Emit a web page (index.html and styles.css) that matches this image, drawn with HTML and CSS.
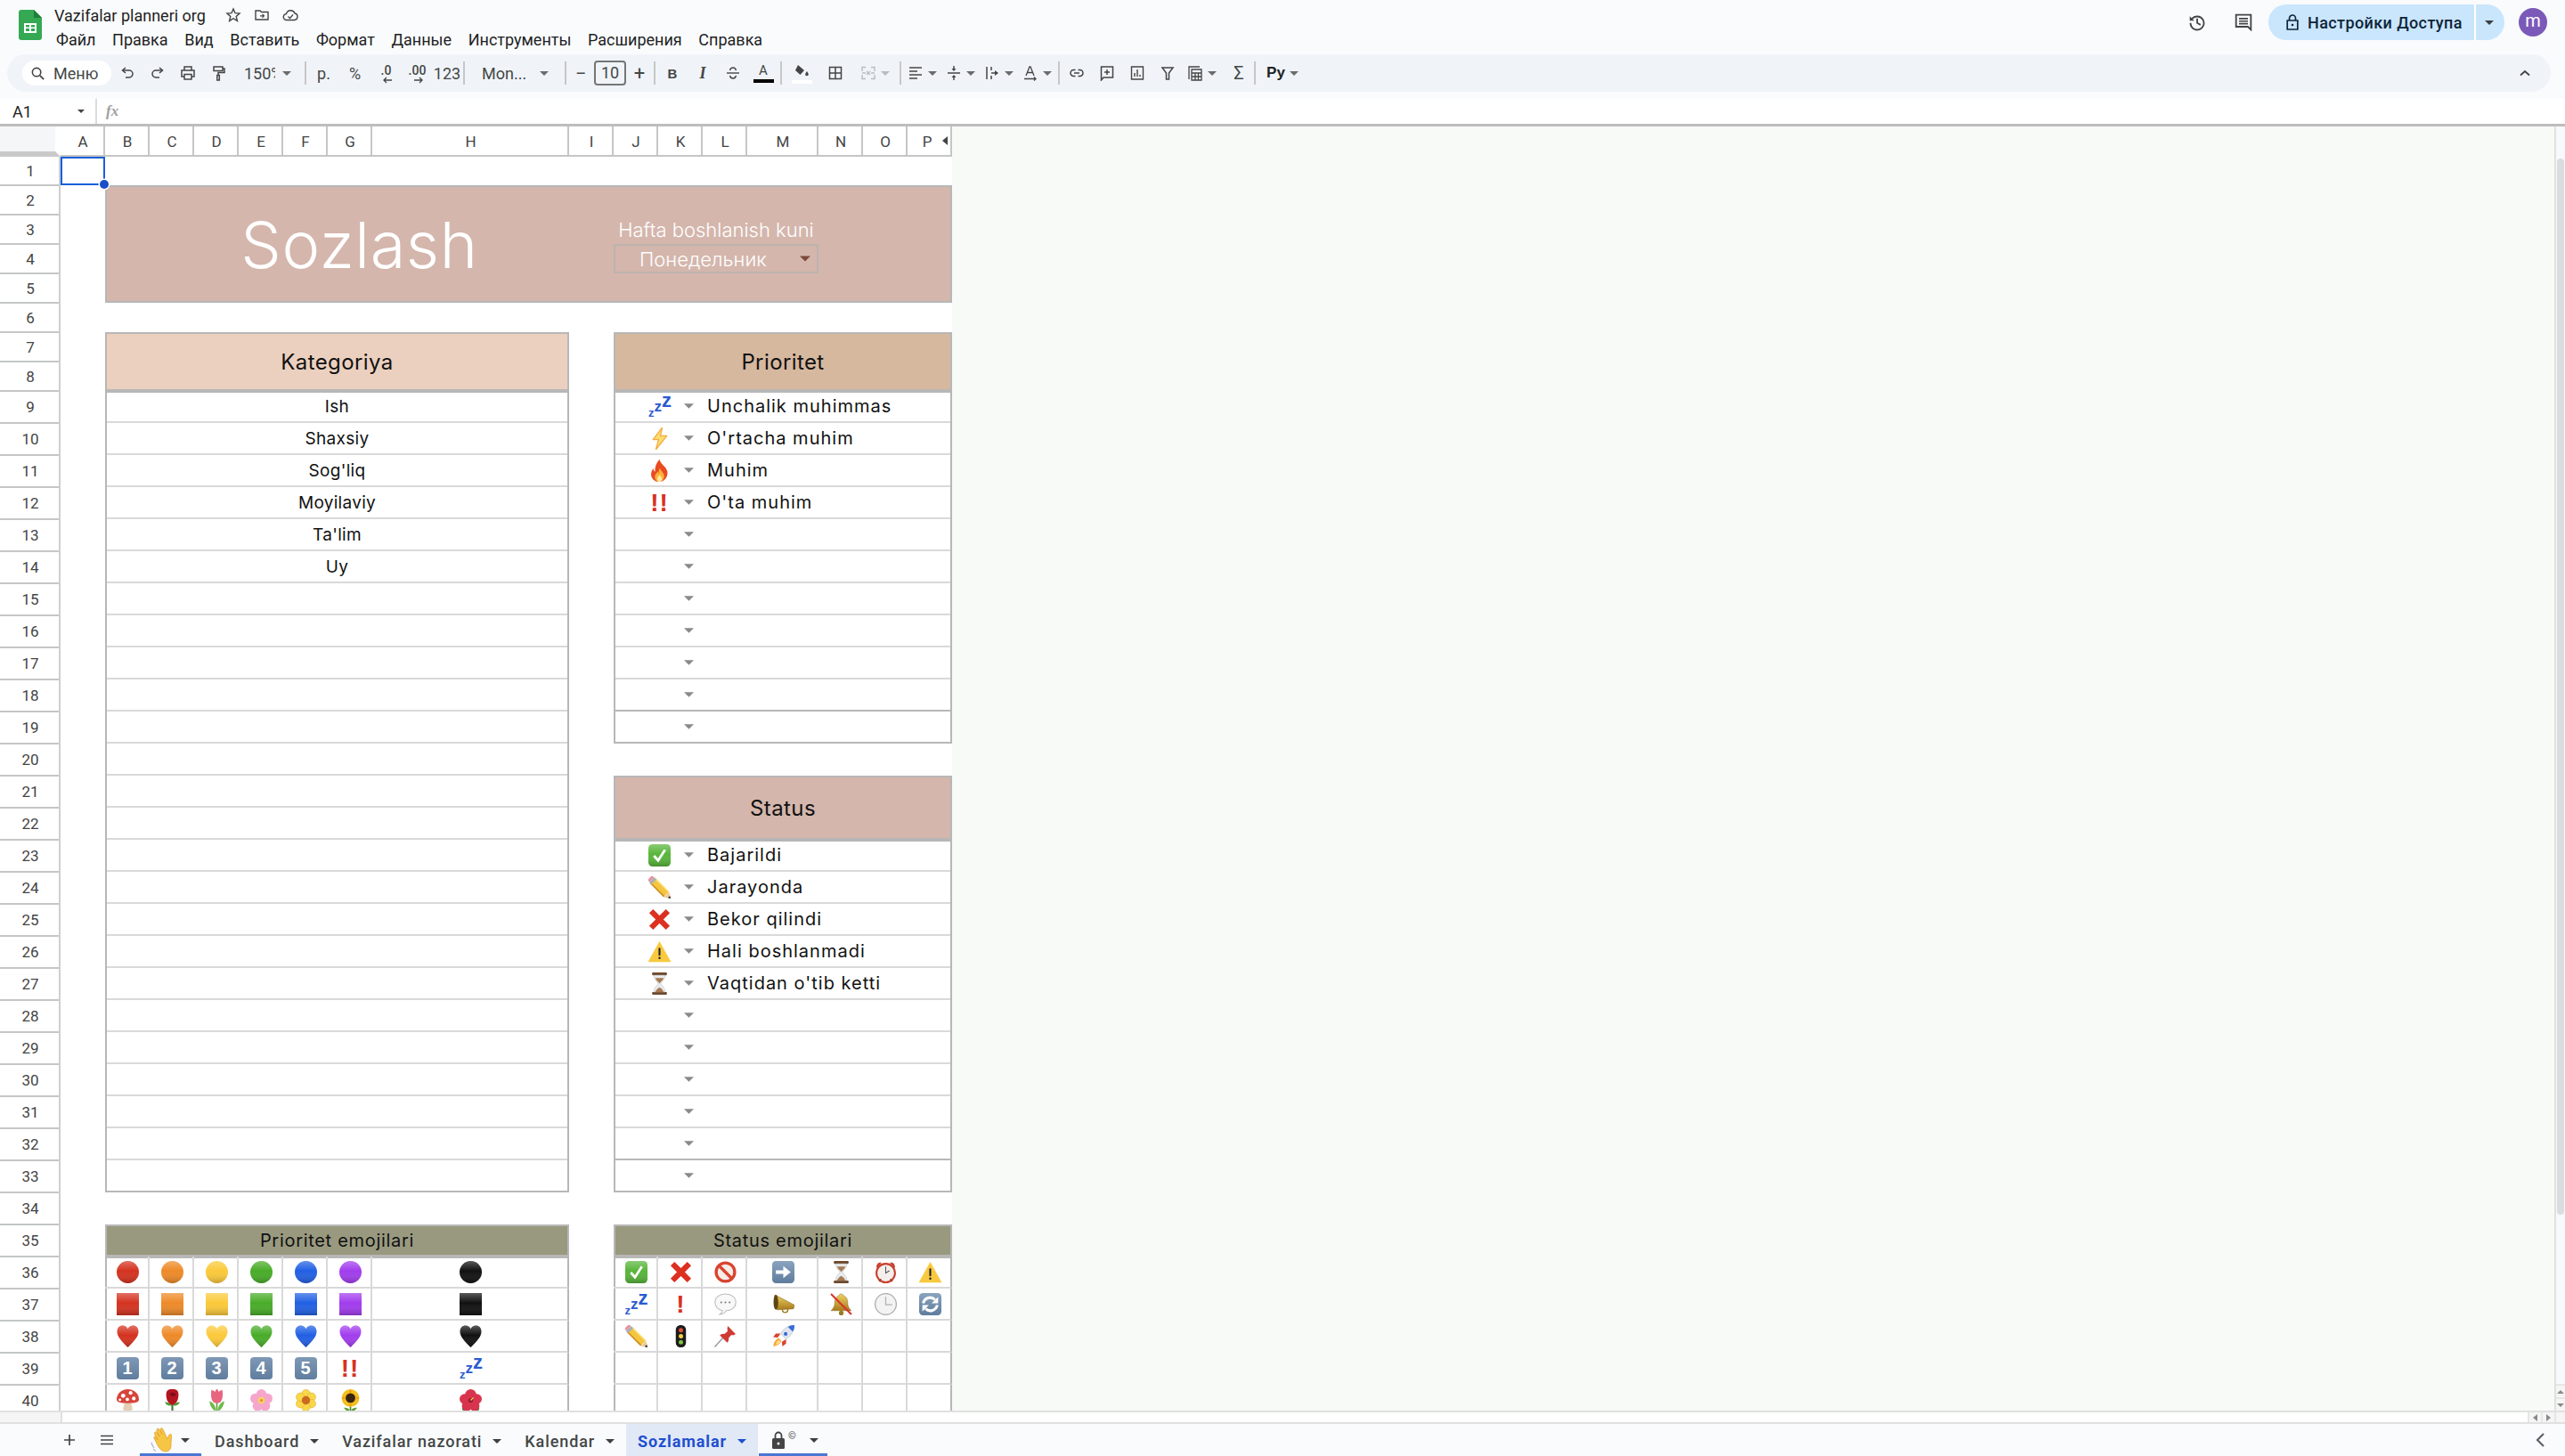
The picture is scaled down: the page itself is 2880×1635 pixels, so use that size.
FILE: index.html
```html
<!DOCTYPE html>
<html lang="ru">
<head>
  <meta charset="UTF-8">
  <title>Vazifalar planneri org</title>
  <link rel="stylesheet" href="styles.css">
</head>
<body>
  <svg class="sprite" aria-hidden="true">
    <defs>
      <linearGradient id="shade" x1="0" y1="0" x2="0" y2="1">
        <stop offset="0" stop-color="#fff" stop-opacity=".3"/>
        <stop offset=".45" stop-color="#fff" stop-opacity="0"/>
        <stop offset="1" stop-color="#000" stop-opacity=".22"/>
      </linearGradient>
      <linearGradient id="steel" x1="0" y1="0" x2="0" y2="1">
        <stop offset="0" stop-color="#8aa3bf"/>
        <stop offset="1" stop-color="#5f7c9d"/>
      </linearGradient>
      <linearGradient id="gold" x1="0" y1="0" x2="0" y2="1">
        <stop offset="0" stop-color="#f0d264"/>
        <stop offset="1" stop-color="#a87a1c"/>
      </linearGradient>
    </defs>
    <symbol id="dot" viewBox="0 0 24 24"><circle cx="12" cy="12" r="12" fill="currentColor"/><circle cx="12" cy="12" r="12" fill="url(#shade)"/></symbol>
    <symbol id="sq" viewBox="0 0 24 24"><rect width="24" height="24" fill="currentColor"/><rect width="24" height="24" fill="url(#shade)"/></symbol>
    <symbol id="heart" viewBox="0 0 24 24"><path d="M12 24C6 18 .5 13 .5 7 .5 3 3 .5 6.500 .5c2.400 0 4.300 1.300 5.500 3.500C13.200 1.800 15.100 .5 17.500 .5 21 .5 23.500 3 23.500 7c0 6-5.500 11-11.500 17z" fill="currentColor"/><path d="M12 24C6 18 .5 13 .5 7 .5 3 3 .5 6.500 .5c2.400 0 4.300 1.300 5.500 3.500C13.200 1.800 15.100 .5 17.500 .5 21 .5 23.500 3 23.500 7c0 6-5.500 11-11.500 17z" fill="url(#shade)"/></symbol>
    <symbol id="zap" viewBox="0 0 24 24"><path d="M15 0 5 13h6L8 24 20 9h-7z" fill="#fcdc72" stroke="#f3aa3c" stroke-width="1.200" stroke-linejoin="round"/></symbol>
    <symbol id="fire" viewBox="0 0 24 24"><path d="M12 0c1 5 7 7 8.500 13 1 5-3 11-8.500 11S2.500 20 3 15c.2-2.500 1.500-4.500 2.500-5.500 0 2 .7 3 1.800 3.500C6.800 8 9 3 12 0z" fill="#ea4a20"/><path d="M12.500 9c.5 3 4.500 5 4.500 9 0 3-2 6-5 6s-5-2.500-5-5.500c0-2.500 2-3.500 3-5.500.4 1 .8 1.500 1.300 1.800C11 12 11.500 10.500 12.500 9z" fill="#fbb13a"/><path d="M12 16c.5 1.500 2.500 2.500 2.500 5 0 2-1 3-2.500 3s-2.500-1-2.500-3c0-2 2-3 2.500-5z" fill="#fde9a0"/></symbol>
    <symbol id="check" viewBox="0 0 24 24"><rect width="24" height="24" rx="4.500" fill="#58b53a"/><rect width="24" height="24" rx="4.500" fill="url(#shade)"/><path d="M6 12.500l4.500 5L18 6" fill="none" stroke="#fff" stroke-width="2.600"/></symbol>
    <symbol id="pencil" viewBox="0 0 24 24"><path d="M4.500 4.500 19.500 19.500" stroke="#f4c53d" stroke-width="7.500"/><path d="M7 2 22 17" stroke="#fbe07a" stroke-width="1.500"/><path d="M2 7 17 22" stroke="#c88d1c" stroke-width="1.500"/><path d="M3.500 3.500 6 6" stroke="#aab0b8" stroke-width="7.500"/><path d="M1.500 1.500 3.500 3.500" stroke="#e88f9a" stroke-width="7"/><path d="M17 22.500 22.500 17l1.500 7z" fill="#e8c79a"/><path d="M21 23.300 23.300 21 24 24z" fill="#222"/></symbol>
    <symbol id="cross" viewBox="0 0 24 24"><path d="M3 3l18 18M21 3 3 21" stroke="#dc3021" stroke-width="6"/></symbol>
    <symbol id="warn" viewBox="0 0 24 24"><path d="M12 1.500 24 23H0z" fill="#f8c93f" stroke="#f8c93f" stroke-width=".6" stroke-linejoin="round"/><rect x="11" y="8" width="2" height="8.500" rx="1" fill="#222"/><circle cx="12" cy="19" r="1.200" fill="#222"/></symbol>
    <symbol id="glass" viewBox="0 0 24 24"><rect x="4" y="0" width="16" height="3" rx="1" fill="#6e4a2e"/><rect x="4" y="21" width="16" height="3" rx="1" fill="#6e4a2e"/><path d="M6 3h12c0 5-4 7-4.500 9 .5 2 4.500 4 4.500 9H6c0-5 4-7 4.500-9C10 10 6 8 6 3z" fill="#e8ecee" stroke="#b8b8b8" stroke-width=".5"/><path d="M7.500 6h9c-1 3-3.500 4-4.500 6-1-2-3.500-3-4.500-6z" fill="#a77a52"/><path d="M12 16c2 1 4 3 4.500 5h-9c.5-2 2.500-4 4.500-5z" fill="#a77a52"/></symbol>
    <symbol id="noentry" viewBox="0 0 24 24"><circle cx="12" cy="12" r="10" fill="#f6ece8" stroke="#d8442f" stroke-width="3.200"/><path d="M5 5l14 14" stroke="#d8442f" stroke-width="3.200"/></symbol>
    <symbol id="arrowbox" viewBox="0 0 24 24"><rect width="24" height="24" rx="4" fill="url(#steel)"/><path d="M4 10h8V5.500l8 6.500-8 6.500V14H4z" fill="#fff"/></symbol>
    <symbol id="alarm" viewBox="0 0 24 24"><path d="M2 6.500C2 3 5 1 7.500 2L2.800 8zM22 6.500C22 3 19 1 16.500 2l4.700 6z" fill="#c8402f"/><circle cx="12" cy="13" r="10" fill="#f4efec" stroke="#c8402f" stroke-width="2"/><path d="M12 6v7l4-2.500" fill="none" stroke="#555" stroke-width="1"/><path d="M5 22l2-2.500M19 22l-2-2.500" stroke="#a03a2a" stroke-width="1.600"/></symbol>
    <symbol id="bubble" viewBox="0 0 24 24"><path d="M12 1C5.500 1 .8 4.800.8 10s4.200 8.500 8 9c-.5 1.500-1.500 3-3 4 3 0 5.500-1.500 7-4 6 0 10.400-3.800 10.400-9S18.500 1 12 1z" fill="#f8f8f8" stroke="#bcbcbc"/><circle cx="7.500" cy="10" r="1" fill="#777"/><circle cx="12" cy="10" r="1" fill="#777"/><circle cx="16.500" cy="10" r="1" fill="#777"/></symbol>
    <symbol id="mega" viewBox="0 0 24 24"><path d="M3 2 24 13l-1 4-17 1C3 18 1 8 3 2z" fill="url(#gold)" stroke="#8d6a1c" stroke-width=".6"/><ellipse cx="4" cy="10" rx="2.500" ry="8" fill="#5d4512"/><path d="M11 17.500c0 2 1 3.500 3 3.500s3-1.500 3-4" fill="none" stroke="#9a7a22" stroke-width="1.400"/></symbol>
    <symbol id="mute" viewBox="0 0 24 24"><path d="M12 1c1.500 0 2.500 1 2.500 2C18 4 19 7 19 11c0 3 1.500 6 4 8H1c2.500-2 4-5 4-8 0-4 1-7 4.500-8C9.500 2 10.500 1 12 1z" fill="url(#gold)" stroke="#8d6a1c" stroke-width=".5"/><circle cx="12" cy="21.500" r="2.500" fill="#9a7a22"/><path d="M1 1l22 22" stroke="#d8342a" stroke-width="2"/></symbol>
    <symbol id="clock" viewBox="0 0 24 24"><circle cx="12" cy="12" r="12" fill="#a9abad"/><circle cx="12" cy="12" r="10.800" fill="#f3f3f3"/><path d="M12 4v8.500h7" fill="none" stroke="#b0b0b0" stroke-width="1.200"/></symbol>
    <symbol id="refresh" viewBox="0 0 24 24"><rect width="24" height="24" rx="4" fill="url(#steel)"/><path d="M4.500 11A7.500 7.500 0 0 1 17 7M19.500 13A7.500 7.500 0 0 1 7 17" fill="none" stroke="#fff" stroke-width="3"/><path d="M20.500 4v7h-7zM3.500 20v-7h7z" fill="#fff"/></symbol>
    <symbol id="traffic" viewBox="0 0 24 24"><rect x="6.500" y="0" width="11" height="24" rx="5" fill="#1c1c1c"/><circle cx="12" cy="5.500" r="2.400" fill="#e0523a"/><circle cx="12" cy="12" r="2.400" fill="#f4cf3e"/><circle cx="12" cy="18.500" r="2.400" fill="#7ec242"/></symbol>
    <symbol id="pin" viewBox="0 0 24 24"><path d="M.5 23.500 10 13" stroke="#8d9aa5" stroke-width="1.300"/><path d="M14.500 1 23 9.500l-2.500 1.500-2 -.5-3 3.500c.5 2-.5 4-1.500 5L6 11c1-1 3-2 5-1.500l3.500-3-.5-2z" fill="#cf3a35"/></symbol>
    <symbol id="rocket" viewBox="0 0 24 24"><path d="M24 0c-6 0-11 3-15 9l6 6c6-4 9-9 9-15z" fill="#dfe6ee" stroke="#a7b2c0" stroke-width=".5"/><path d="M24 0c-3 0-5 .7-7 2l5 5c1.500-2 2-4 2-7z" fill="#3a6ad8"/><circle cx="14.500" cy="9.500" r="2" fill="#3a6ad8"/><path d="M9 9H4L1 13l5 .5zM15 15v5l-4 3-.5-5z" fill="#d8442f"/><path d="M7 14c-3 1-5 4-6 9 5-1 8-3 9-6z" fill="#f8a83a"/><path d="M7 16c-1.500 1-2.500 2.500-3 5 2.500-.5 4-1.500 5-3z" fill="#fde08a"/></symbol>
    <symbol id="shroom" viewBox="0 0 24 24"><path d="M8.500 13h7c0 4 1.500 6 1.500 8 0 2-3 3-5 3s-5-1-5-3c0-2 1.500-4 1.500-8z" fill="#e3cfb4"/><path d="M12 0C5 0 0 5 0 11c0 3 4 4 12 4s12-1 12-4c0-6-5-11-12-11z" fill="#d8433a"/><circle cx="7" cy="7" r="2.300" fill="#fff"/><circle cx="15" cy="4" r="2" fill="#fff"/><circle cx="18.500" cy="10" r="2" fill="#fff"/><circle cx="11.500" cy="11" r="1.800" fill="#fff"/><circle cx="3.500" cy="11.500" r="1.400" fill="#fff"/></symbol>
    <symbol id="rose" viewBox="0 0 24 24"><path d="M11 15h2v9h-2z" fill="#3b7a2c"/><path d="M11 18C8 18 5 17 4 14c3 0 6 1 7 4zM13 18c3 0 6-1 7-4-3 0-6 1-7 4z" fill="#4c9a36"/><path d="M12 0c3-.5 6 1 6.500 4 .5 4-.5 8-2 10-1.500 2-3 3-4.500 3s-3-1-4.500-3c-1.500-2-2.500-6-2-10C6 1 9-.5 12 0z" fill="#b4151f"/><path d="M9 5c2-2 5-2 7 0-1 3-5 4-7 0z" fill="#7d0d16"/></symbol>
    <symbol id="tulip" viewBox="0 0 24 24"><path d="M11.200 13h1.600v11h-1.600z" fill="#5aa23c"/><path d="M11 24C7 22 4.500 18 4 13c4 1 7 5 7 11zM13 24c4-2 6.500-6 7-11-4 1-7 5-7 11z" fill="#6fb84a"/><path d="M6 1c2 0 3.500 1 4 2 .5-1.500 1-3 2-3s1.500 1.500 2 3c.5-1 2-2 4-2 .5 5 .5 9-1.500 12-1 1.500-2.500 2-4.500 2s-3.500-.5-4.500-2C5.500 10 5.500 6 6 1z" fill="#e8657f"/></symbol>
    <symbol id="blossom" viewBox="0 0 24 24"><g fill="#f6a6cc"><circle cx="12" cy="5.500" r="5.500"/><circle cx="18.500" cy="10" r="5.500"/><circle cx="16" cy="18" r="5.500"/><circle cx="8" cy="18" r="5.500"/><circle cx="5.500" cy="10" r="5.500"/></g><circle cx="12" cy="12" r="3.600" fill="#f4d35e"/><circle cx="12" cy="12" r="1.500" fill="#e88b3a"/></symbol>
    <symbol id="bloom" viewBox="0 0 24 24"><g fill="#f8d84a" stroke="#e0a92a" stroke-width=".5"><circle cx="12" cy="5" r="4.600"/><circle cx="18" cy="8.500" r="4.600"/><circle cx="18" cy="15.500" r="4.600"/><circle cx="12" cy="19" r="4.600"/><circle cx="6" cy="15.500" r="4.600"/><circle cx="6" cy="8.500" r="4.600"/></g><circle cx="12" cy="12" r="4.500" fill="#cc6a1e"/></symbol>
    <symbol id="sunflower" viewBox="0 0 24 24"><path d="M11.200 16h1.600v8h-1.600z" fill="#4c8a30"/><path d="M11 22c-2-2-4-2.500-6-2 1 2.500 3.500 4 6 4zM13 22c2-2 4-2.500 6-2-1 2.500-3.500 4-6 4z" fill="#5fa03c"/><circle cx="12" cy="9.500" r="9.500" fill="#f5bf1e"/><path d="M12 0l1.500 3h-3zM12 19l1.500-3h-3zM2.500 9.500l3 1.500v-3zM21.500 9.500l-3 1.500v-3z" fill="#e59a12"/><circle cx="12" cy="9.500" r="5.200" fill="#3a2412"/></symbol>
    <symbol id="hibiscus" viewBox="0 0 24 24"><path d="M3 20c-1 2 1 4 4 4l3-4zM21 20c1 2-1 4-4 4l-3-4z" fill="#3f8f3a"/><g fill="#d8344e"><circle cx="12" cy="6" r="6"/><circle cx="18.500" cy="10.500" r="5.500"/><circle cx="16" cy="18" r="5.500"/><circle cx="8" cy="18" r="5.500"/><circle cx="5.500" cy="10.500" r="5.500"/></g><circle cx="12" cy="12" r="2.500" fill="#961b33"/><path d="M12 12l3-3" stroke="#f6cf44" stroke-width="1.300"/></symbol>
    <symbol id="wave" viewBox="0 0 24 28"><path d="M4 12 8 20c2 4 5 7 9 7 4 0 6-3 6-7 0-3 0-7 1-11-.5-2-2.500-2-3.500 0l-1.500 4-5-11c-1-2-3-1.500-3 .5l2 5L10 2.500C9 .5 6.500 1 7 3.500L10 10 7.500 6C6.500 4 4 5 4.500 7l3.500 7-2-3c-1-1.500-3-.5-2 1z" fill="#f6c544" stroke="#dc9a22" stroke-width=".7"/><path d="M1 17c.5 2 1.500 4 3 6M3 24c1 1.300 2 2 3 2.500" fill="none" stroke="#a8b4bd" stroke-width="1.200"/></symbol>
    <symbol id="caret" viewBox="0 0 10 5"><path d="M0 0h10L5 5z" fill="currentColor"/></symbol>
  </svg>

  <header class="topbar">
    <svg class="logo" viewBox="0 0 26 34"><path d="M3 0h14l9 9v22a3 3 0 0 1-3 3H3a3 3 0 0 1-3-3V3a3 3 0 0 1 3-3z" fill="#34a853"/><path d="M17 0l9 9h-9z" fill="#1e7e3a"/><path d="M6 15h14v11H6zm2 2v2.500h4V17zm6 0v2.500h4V17zM8 21v3h4v-3zm6 0v3h4v-3z" fill="#fff" fill-rule="evenodd"/></svg>
    <div class="doc">
      <div class="doc-title">
        <span class="doc-name">Vazifalar planneri org</span>
        <svg class="doc-ico" viewBox="0 0 18 18"><path d="M9 2l2 4.700 5 .4-3.800 3.300 1.200 5L9 12.700 4.600 15.400l1.200-5L2 7.100l5-.4z" fill="none" stroke="#444" stroke-width="1.400"/></svg>
        <svg class="doc-ico" viewBox="0 0 18 18"><path d="M2 4h5l1.500 1.500H16V14H2z" fill="none" stroke="#444" stroke-width="1.400"/><path d="M7 9.800h4.500M9.500 7.800l2 2-2 2" fill="none" stroke="#444" stroke-width="1.200"/></svg>
        <svg class="doc-ico" viewBox="0 0 18 18"><path d="M5 14.500a3.500 3.500 0 0 1-.5-7A5 5 0 0 1 14 7a3.800 3.800 0 0 1-.5 7.500z" fill="none" stroke="#444" stroke-width="1.400"/><path d="M6.500 10.500l2 2 3.500-4" fill="none" stroke="#444" stroke-width="1.200"/></svg>
      </div>
      <nav class="menu">
        <span>Файл</span><span>Правка</span><span>Вид</span><span>Вставить</span><span>Формат</span><span>Данные</span><span>Инструменты</span><span>Расширения</span><span>Справка</span>
      </nav>
    </div>
    <div class="actions">
      <svg class="act-ico" viewBox="0 0 24 24"><path d="M5 7.500A9 9 0 1 1 3 13" fill="none" stroke="#444" stroke-width="2.200"/><path d="M2 4v6h6z" fill="#444"/><path d="M12 7v6l4.500 2.500" fill="none" stroke="#444" stroke-width="2.200"/></svg>
      <svg class="act-ico act-comment" viewBox="0 0 24 24"><path d="M2 2h20v20l-4-4H2z" fill="none" stroke="#444" stroke-width="2.200"/><path d="M6 7h12M6 10.500h12M6 14h12" stroke="#444" stroke-width="2"/></svg>
      <div class="share">
        <span class="share-main">
          <svg class="share-lock" viewBox="0 0 14 18"><path d="M3.500 7V4.500a3.500 3.500 0 0 1 7 0V7M1.200 7h11.600v10H1.200z" fill="none" stroke="#0f2438" stroke-width="1.700"/><circle cx="7" cy="12" r="1.300" fill="#0f2438"/></svg>
          Настройки Доступа
        </span>
        <span class="share-drop"><svg class="caret dark"><use href="#caret"/></svg></span>
      </div>
      <div class="avatar">m</div>
    </div>
  </header>

  <div class="toolbar">
    <div class="search">
      <svg class="ti small" viewBox="0 0 18 18"><circle cx="7.500" cy="7.500" r="5" fill="none" stroke="#444" stroke-width="1.700"/><path d="M11.500 11.500 16 16" stroke="#444" stroke-width="1.900"/></svg>
      <span>Меню</span>
    </div>
    <div class="tb"><svg class="ti" viewBox="0 0 18 18"><path d="M4 6h7a3.500 3.500 0 0 1 0 8H7" fill="none" stroke="#444" stroke-width="1.500"/><path d="M7 3 3.500 6 7 9" fill="none" stroke="#444" stroke-width="1.500"/></svg></div>
    <div class="tb"><svg class="ti" viewBox="0 0 18 18"><path d="M14 6H7a3.500 3.500 0 0 0 0 8h4" fill="none" stroke="#444" stroke-width="1.500"/><path d="M11 3l3.500 3L11 9" fill="none" stroke="#444" stroke-width="1.500"/></svg></div>
    <div class="tb"><svg class="ti" viewBox="0 0 18 18"><path d="M5 6V2h8v4M5 13H2V6h14v7h-3M5 10.500h8V16H5z" fill="none" stroke="#444" stroke-width="1.500"/></svg></div>
    <div class="tb"><svg class="ti" viewBox="0 0 18 18"><path d="M4 2h10v4.500H4zM14 4h2v4.500H9v3M7.800 11.500h2.500V17H7.800z" fill="none" stroke="#444" stroke-width="1.500"/></svg></div>
    <div class="tb zoom"><span class="zoom-val">150%</span><svg class="caret"><use href="#caret"/></svg></div>
    <i class="sep"></i>
    <div class="tb w35">р.</div>
    <div class="tb w35">%</div>
    <div class="tb w35 tiny">.0<svg class="ti dec" viewBox="0 0 12 8"><path d="M11 4H3M5 1 2 4l3 3" fill="none" stroke="#444" stroke-width="1.300"/></svg></div>
    <div class="tb w35 tiny">.00<svg class="ti dec" viewBox="0 0 12 8"><path d="M1 4h8M7 1l3 3-3 3" fill="none" stroke="#444" stroke-width="1.300"/></svg></div>
    <div class="tb w30">123</div>
    <i class="sep"></i>
    <div class="tb fontname"><span>Mon...</span><svg class="caret"><use href="#caret"/></svg></div>
    <i class="sep"></i>
    <div class="tb w26">−</div>
    <div class="sizebox">10</div>
    <div class="tb w26">+</div>
    <i class="sep"></i>
    <div class="tb fmt bold">B</div>
    <div class="tb fmt ital">I</div>
    <div class="tb"><svg class="ti" viewBox="0 0 18 18"><path d="M2 9h14" stroke="#444" stroke-width="1.400"/><path d="M12.500 6c-.5-2-2-3-3.500-3S6 4 5.500 6M5.500 12c.5 2 2 3 3.500 3s3-1 3.500-3" fill="none" stroke="#444" stroke-width="1.400"/></svg></div>
    <div class="tb stacked"><span class="let">A</span><i class="bar black"></i></div>
    <i class="sep"></i>
    <div class="tb stacked w40"><svg class="ti" viewBox="0 0 18 14"><path d="M5 1l7 6-4.500 5L2 7z" fill="#444"/><path d="M15 8c1 1.500 1.800 2.500 1.800 3.500a1.800 1.800 0 0 1-3.600 0C13.200 10.500 14 9.500 15 8z" fill="#444"/></svg><i class="bar white"></i></div>
    <div class="tb w32"><svg class="ti" viewBox="0 0 18 18"><path d="M2.500 2.500h13v13h-13zM9 2.500v13M2.500 9h13" fill="none" stroke="#444" stroke-width="1.500"/></svg></div>
    <div class="tb w50 off"><svg class="ti" viewBox="0 0 18 18"><path d="M2 7V2.500h4M12 2.500h4V7M2 11v4.500h4M12 15.500h4V11M2 9h4M12 9h4M7 7l2 2-2 2M11 7 9 9l2 2" fill="none" stroke="#b7bcc0" stroke-width="1.400"/></svg><svg class="caret"><use href="#caret"/></svg></div>
    <i class="sep"></i>
    <div class="tb w42"><svg class="ti" viewBox="0 0 18 18"><path d="M2 3h14M2 7h9M2 11h14M2 15h9" stroke="#444" stroke-width="1.500"/></svg><svg class="caret"><use href="#caret"/></svg></div>
    <div class="tb w42"><svg class="ti" viewBox="0 0 18 18"><path d="M2 9h14" stroke="#444" stroke-width="1.500"/><path d="M9 1v5M9 12v5" stroke="#444" stroke-width="1.400"/><path d="M6.500 4 9 7l2.500-3zM6.500 14 9 11l2.500 3z" fill="#444"/></svg><svg class="caret"><use href="#caret"/></svg></div>
    <div class="tb w42"><svg class="ti" viewBox="0 0 18 18"><path d="M3 2v14M8 2v4M8 12v4M8 9h7" fill="none" stroke="#444" stroke-width="1.500"/><path d="M12 6l4 3-4 3z" fill="#444"/></svg><svg class="caret"><use href="#caret"/></svg></div>
    <div class="tb w42"><svg class="ti" viewBox="0 0 18 18"><path d="M4 12 8 2h1l4 10M5.500 8.500h6M2 15.500h13M13 13.500l2 2-2 2" fill="none" stroke="#444" stroke-width="1.300"/></svg><svg class="caret"><use href="#caret"/></svg></div>
    <i class="sep"></i>
    <div class="tb"><svg class="ti" viewBox="0 0 18 18"><path d="M7.500 5.500H5.500a3.500 3.500 0 0 0 0 7h2M10.500 5.500h2a3.500 3.500 0 0 1 0 7h-2M6 9h6" fill="none" stroke="#444" stroke-width="1.500"/></svg></div>
    <div class="tb"><svg class="ti" viewBox="0 0 18 18"><path d="M2.500 2h13v12H5l-2.500 3zM9 5v6M6 8h6" fill="none" stroke="#444" stroke-width="1.500"/></svg></div>
    <div class="tb"><svg class="ti" viewBox="0 0 18 18"><path d="M2.500 2h13v14h-13zM6 13V9M9 13V5M12 13v-2" fill="none" stroke="#444" stroke-width="1.400"/></svg></div>
    <div class="tb"><svg class="ti" viewBox="0 0 18 18"><path d="M3 3h12l-4.500 6v7h-3V9z" fill="none" stroke="#444" stroke-width="1.500"/></svg></div>
    <div class="tb w42"><svg class="ti" viewBox="0 0 18 18"><path d="M2 16V2h12M5 5h11v12H5zM5 9h11M5 13h11M9 9v8M12.500 9v8" fill="none" stroke="#444" stroke-width="1.300"/></svg><svg class="caret"><use href="#caret"/></svg></div>
    <div class="tb sigma">Σ</div>
    <i class="sep"></i>
    <div class="tb w50 script"><span>Ру</span><svg class="caret"><use href="#caret"/></svg></div>
    <svg class="collapse" viewBox="0 0 18 18"><path d="M4 11.500 9 7l5 4.500" fill="none" stroke="#444" stroke-width="1.800"/></svg>
  </div>

  <div class="formula">
    <div class="namebox"><span>A1</span><svg class="caret"><use href="#caret"/></svg></div>
    <div class="fx">fx</div>
  </div>

  <main class="sheet">
    <div class="book">
      <div class="colhead">
        <div class="corner"></div>
        <span>A</span><span>B</span><span>C</span><span>D</span><span>E</span><span>F</span><span>G</span><span>H</span><span>I</span><span>J</span><span>K</span><span>L</span><span>M</span><span>N</span><span>O</span><span class="last">P<i class="hide-arrow"></i></span>
      </div>
      <div class="body">
        <div class="rownums">
          <span class="r-s">1</span><span class="r-s">2</span><span class="r-s">3</span><span class="r-s">4</span><span class="r-s">5</span><span class="r-s">6</span><span class="r-s">7</span><span class="r-s">8</span>
          <span>9</span><span>10</span><span>11</span><span>12</span><span>13</span><span>14</span><span>15</span><span>16</span><span>17</span><span>18</span><span>19</span><span>20</span><span>21</span><span>22</span><span>23</span><span>24</span><span>25</span><span>26</span><span>27</span><span>28</span><span>29</span><span>30</span><span>31</span><span>32</span><span>33</span><span>34</span><span>35</span><span>36</span><span>37</span><span>38</span><span>39</span><span>40</span>
        </div>
        <div class="cells">
          <div class="banner"></div>
          <div class="cursor"><i class="handle"></i></div>
          <h1 class="banner-title">Sozlash</h1>
          <div class="banner-label">Hafta boshlanish kuni</div>
          <div class="banner-select"><span>Понедельник</span><svg class="caret brown"><use href="#caret"/></svg></div>

          <h2 class="thead cat-head">Kategoriya</h2>
          <div class="list cat-list">
            <div class="row">Ish</div><div class="row">Shaxsiy</div><div class="row">Sog'liq</div><div class="row">Moyilaviy</div><div class="row">Ta'lim</div><div class="row">Uy</div>
            <div class="row"></div><div class="row"></div><div class="row"></div><div class="row"></div><div class="row"></div><div class="row"></div><div class="row"></div><div class="row"></div><div class="row"></div><div class="row"></div><div class="row"></div><div class="row"></div><div class="row"></div><div class="row"></div><div class="row"></div><div class="row"></div><div class="row"></div><div class="row"></div><div class="row"></div>
          </div>

          <h2 class="thead pri-head">Prioritet</h2>
          <div class="list pri-list">
            <div class="pick"><span class="em zzz"><b>z</b><b>z</b><b>z</b></span><svg class="caret"><use href="#caret"/></svg><span>Unchalik muhimmas</span></div>
            <div class="pick"><svg class="em"><use href="#zap"/></svg><svg class="caret"><use href="#caret"/></svg><span>O'rtacha muhim</span></div>
            <div class="pick"><svg class="em"><use href="#fire"/></svg><svg class="caret"><use href="#caret"/></svg><span>Muhim</span></div>
            <div class="pick"><span class="em bang">!!</span><svg class="caret"><use href="#caret"/></svg><span>O'ta muhim</span></div>
            <div class="pick"><i class="em"></i><svg class="caret"><use href="#caret"/></svg></div>
            <div class="pick"><i class="em"></i><svg class="caret"><use href="#caret"/></svg></div>
            <div class="pick"><i class="em"></i><svg class="caret"><use href="#caret"/></svg></div>
            <div class="pick"><i class="em"></i><svg class="caret"><use href="#caret"/></svg></div>
            <div class="pick"><i class="em"></i><svg class="caret"><use href="#caret"/></svg></div>
            <div class="pick dark-line"><i class="em"></i><svg class="caret"><use href="#caret"/></svg></div>
            <div class="pick"><i class="em"></i><svg class="caret"><use href="#caret"/></svg></div>
          </div>

          <h2 class="thead st-head">Status</h2>
          <div class="list st-list">
            <div class="pick"><svg class="em"><use href="#check"/></svg><svg class="caret"><use href="#caret"/></svg><span>Bajarildi</span></div>
            <div class="pick"><svg class="em"><use href="#pencil"/></svg><svg class="caret"><use href="#caret"/></svg><span>Jarayonda</span></div>
            <div class="pick"><svg class="em"><use href="#cross"/></svg><svg class="caret"><use href="#caret"/></svg><span>Bekor qilindi</span></div>
            <div class="pick"><svg class="em"><use href="#warn"/></svg><svg class="caret"><use href="#caret"/></svg><span>Hali boshlanmadi</span></div>
            <div class="pick"><svg class="em"><use href="#glass"/></svg><svg class="caret"><use href="#caret"/></svg><span>Vaqtidan o'tib ketti</span></div>
            <div class="pick"><i class="em"></i><svg class="caret"><use href="#caret"/></svg></div>
            <div class="pick"><i class="em"></i><svg class="caret"><use href="#caret"/></svg></div>
            <div class="pick"><i class="em"></i><svg class="caret"><use href="#caret"/></svg></div>
            <div class="pick"><i class="em"></i><svg class="caret"><use href="#caret"/></svg></div>
            <div class="pick dark-line"><i class="em"></i><svg class="caret"><use href="#caret"/></svg></div>
            <div class="pick"><i class="em"></i><svg class="caret"><use href="#caret"/></svg></div>
          </div>

          <h3 class="ehead pe-head">Prioritet emojilari</h3>
          <div class="egrid pe-grid">
            <div><svg class="em c-red"><use href="#dot"/></svg></div><div><svg class="em c-orange"><use href="#dot"/></svg></div><div><svg class="em c-yellow"><use href="#dot"/></svg></div><div><svg class="em c-green"><use href="#dot"/></svg></div><div><svg class="em c-blue"><use href="#dot"/></svg></div><div><svg class="em c-purple"><use href="#dot"/></svg></div><div><svg class="em c-black"><use href="#dot"/></svg></div>
            <div><svg class="em c-red"><use href="#sq"/></svg></div><div><svg class="em c-orange"><use href="#sq"/></svg></div><div><svg class="em c-yellow"><use href="#sq"/></svg></div><div><svg class="em c-green"><use href="#sq"/></svg></div><div><svg class="em c-blue"><use href="#sq"/></svg></div><div><svg class="em c-purple"><use href="#sq"/></svg></div><div><svg class="em c-black"><use href="#sq"/></svg></div>
            <div><svg class="em c-red"><use href="#heart"/></svg></div><div><svg class="em c-orange"><use href="#heart"/></svg></div><div><svg class="em c-yellow"><use href="#heart"/></svg></div><div><svg class="em c-green"><use href="#heart"/></svg></div><div><svg class="em c-blue"><use href="#heart"/></svg></div><div><svg class="em c-purple"><use href="#heart"/></svg></div><div><svg class="em c-black"><use href="#heart"/></svg></div>
            <div><span class="em keycap">1</span></div><div><span class="em keycap">2</span></div><div><span class="em keycap">3</span></div><div><span class="em keycap">4</span></div><div><span class="em keycap">5</span></div><div><span class="em bang">!!</span></div><div><span class="em zzz"><b>z</b><b>z</b><b>z</b></span></div>
            <div><svg class="em"><use href="#shroom"/></svg></div><div><svg class="em"><use href="#rose"/></svg></div><div><svg class="em"><use href="#tulip"/></svg></div><div><svg class="em"><use href="#blossom"/></svg></div><div><svg class="em"><use href="#bloom"/></svg></div><div><svg class="em"><use href="#sunflower"/></svg></div><div><svg class="em"><use href="#hibiscus"/></svg></div>
          </div>

          <h3 class="ehead se-head">Status emojilari</h3>
          <div class="egrid se-grid">
            <div><svg class="em"><use href="#check"/></svg></div><div><svg class="em"><use href="#cross"/></svg></div><div><svg class="em"><use href="#noentry"/></svg></div><div><svg class="em"><use href="#arrowbox"/></svg></div><div><svg class="em"><use href="#glass"/></svg></div><div><svg class="em"><use href="#alarm"/></svg></div><div><svg class="em"><use href="#warn"/></svg></div>
            <div><span class="em zzz"><b>z</b><b>z</b><b>z</b></span></div><div><span class="em bang one">!</span></div><div><svg class="em"><use href="#bubble"/></svg></div><div><svg class="em"><use href="#mega"/></svg></div><div><svg class="em"><use href="#mute"/></svg></div><div><svg class="em"><use href="#clock"/></svg></div><div><svg class="em"><use href="#refresh"/></svg></div>
            <div><svg class="em"><use href="#pencil"/></svg></div><div><svg class="em"><use href="#traffic"/></svg></div><div><svg class="em"><use href="#pin"/></svg></div><div><svg class="em"><use href="#rocket"/></svg></div><div></div><div></div><div></div>
            <div></div><div></div><div></div><div></div><div></div><div></div><div></div>
            <div></div><div></div><div></div><div></div><div></div><div></div><div></div>
          </div>
        </div>
      </div>
    </div>
    <div class="canvas"></div>
    <div class="vscroll">
      <div class="vtrack"><i class="vthumb"></i></div>
      <div class="vbtn"><svg class="caret up"><use href="#caret"/></svg></div>
      <div class="vbtn"><svg class="caret"><use href="#caret"/></svg></div>
    </div>
  </main>

  <div class="hscroll">
    <div class="hcorner"></div>
    <div class="htrack"></div>
    <div class="hbtn"><i class="tri-l"></i></div>
    <div class="hbtn"><i class="tri-r"></i></div>
    <div class="hend"></div>
  </div>

  <footer class="tabs">
    <svg class="tabs-ico plus" viewBox="0 0 14 14"><path d="M7 1v12M1 7h12" stroke="#444" stroke-width="1.700"/></svg>
    <svg class="tabs-ico burger" viewBox="0 0 14 14"><path d="M0 2.500h14M0 7h14M0 11.500h14" stroke="#444" stroke-width="1.500"/></svg>
    <div class="tab tab-wave on-line"><svg class="wave"><use href="#wave"/></svg><svg class="caret dark"><use href="#caret"/></svg></div>
    <div class="tab"><span>Dashboard</span><svg class="caret dark"><use href="#caret"/></svg></div>
    <div class="tab"><span>Vazifalar nazorati</span><svg class="caret dark"><use href="#caret"/></svg></div>
    <div class="tab"><span>Kalendar</span><svg class="caret dark"><use href="#caret"/></svg></div>
    <div class="tab current"><span>Sozlamalar</span><svg class="caret"><use href="#caret"/></svg></div>
    <div class="tab tab-lock on-line">
      <svg class="lock-ico" viewBox="0 0 14 20"><path d="M3.500 8V5a3.500 3.500 0 0 1 7 0v3" fill="none" stroke="#444" stroke-width="1.800"/><rect y="8" width="14" height="12" rx="1.500" fill="#444"/><circle cx="7" cy="14" r="1.500" fill="#f9fbfd"/></svg>
      <span class="copy">©</span><svg class="caret dark"><use href="#caret"/></svg>
    </div>
    <svg class="tabs-ico side" viewBox="0 0 14 18"><path d="M11 2 4 9l7 7" fill="none" stroke="#5f6368" stroke-width="2.200"/></svg>
  </footer>
</body>
</html>
```

FILE: styles.css
```css
* { box-sizing: border-box; }
html, body { margin: 0; height: 100%; }
body {
  --cols: repeat(7, 50px) 221px repeat(4, 50px) 80px repeat(3, 50px);
  --line: #d9d9d9;
  --edge: #b7b7b7;
  --hdr: #c4c7c5;
  width: 2880px; height: 1635px; overflow: hidden;
  display: flex; flex-direction: column;
  background: #f9fbfd; color: #1f1f1f;
  font-family: Roboto, "Liberation Sans", sans-serif;
}
.sprite { position: absolute; width: 0; height: 0; }
.caret { width: 10px; height: 5px; color: #6b6b6b; flex: none; display: block; }
.caret.dark { color: #3c4043; }
.caret.brown { color: #7a4a3a; width: 12px; height: 7px; }
.caret.up { transform: rotate(180deg); }

/* top bar */
.topbar { height: 61px; flex: none; display: flex; padding-left: 21px; }
.logo { width: 26px; height: 34px; margin-top: 11px; flex: none; }
.doc { margin-left: 14px; padding-top: 6px; }
.doc-title { display: flex; align-items: center; height: 22px; }
.doc-name { font-size: 18px; width: 192px; letter-spacing: 0; }
.doc-ico { width: 18px; height: 18px; margin-right: 14px; }
.menu { display: flex; gap: 18.6px; font-size: 18px; margin-top: 6px; margin-left: 2px; color: #1f1f1f; }
.actions { margin-left: auto; display: flex; align-items: center; padding: 5px 20px 16px 0; }
.act-ico { width: 20px; height: 20px; }
.act-comment { margin-left: 32px; }
.share { display: flex; height: 40px; margin-left: 18px; border-radius: 20px; background: #c9e6fd; overflow: hidden; color: #0f2438; font-size: 18px; font-weight: 500; }
.share-main { width: 231px; display: flex; align-items: center; gap: 10px; padding-left: 20px; white-space: nowrap; letter-spacing: .4px; }
.share-lock { width: 14px; height: 18px; }
.share-drop { width: 34px; border-left: 2px solid #fff; display: flex; align-items: center; justify-content: center; padding-right: 2px; }
.avatar { width: 32px; height: 32px; margin-left: 16px; border-radius: 50%; background: #7b59b8; color: #fff; font-size: 20px; text-align: center; line-height: 29px; }

/* toolbar */
.toolbar { height: 42px; flex: none; margin: 0 16px 8px 8px; padding-left: 17px; display: flex; align-items: center; border-radius: 21px; background: #f0f4f9; color: #444746; font-size: 18px; }
.search { width: 100px; height: 28px; background: #fff; border-radius: 14px; display: flex; align-items: center; gap: 9px; padding-left: 9px; margin-right: 1px; }
.ti { width: 18px; height: 18px; flex: none; }
.ti.small { width: 17px; height: 17px; }
.tb { width: 34px; height: 30px; flex: none; display: flex; align-items: center; justify-content: center; gap: 5px; }
.w26 { width: 28px; font-size: 22px; }
.w30 { width: 32px; }
.w32 { width: 36px; }
.w35 { width: 35px; }
.w40 { width: 40px; }
.w42 { width: 43px; }
.w50 { width: 52px; }
.tiny { font-size: 14px; position: relative; padding-bottom: 6px; gap: 0; font-weight: 500; }
.ti.dec { position: absolute; width: 12px; height: 8px; left: 13px; bottom: 3px; }
.zoom { width: 78px; justify-content: flex-start; padding-left: 12px; gap: 8px; }
.zoom-val { width: 35px; overflow: hidden; white-space: nowrap; }
.fontname { width: 108px; justify-content: flex-start; padding-left: 17px; gap: 15px; }
.sep { width: 2px; height: 26px; background: #c7c7c7; flex: none; margin: 0 2px; }
.sizebox { width: 36px; height: 28px; margin: 0 1px; border: 2px solid #747775; border-radius: 4px; text-align: center; line-height: 24px; flex: none; }
.fmt { font-family: "Liberation Sans", sans-serif; }
.bold { font-weight: 700; font-size: 15px; }
.ital { font-style: italic; font-weight: 700; font-family: "Liberation Serif", serif; font-size: 18px; }
.stacked { flex-direction: column; gap: 2px; }
.let { font-size: 15px; line-height: 15px; }
.bar { width: 23px; height: 4px; display: block; }
.bar.black { background: #000; }
.bar.white { background: #fff; }
.off .caret { color: #b7bcc0; }
.sigma { font-size: 20px; width: 30px; margin-left: 5px; }
.script { font-family: "Liberation Sans", sans-serif; font-weight: 700; font-size: 17px; color: #222; margin-left: 2px; }
.collapse { width: 18px; height: 18px; margin-left: auto; margin-right: 20px; }

/* formula bar */
.formula { height: 28px; flex: none; background: #fff; display: flex; align-items: center; font-size: 18px; }
.namebox { width: 109px; height: 28px; display: flex; align-items: center; justify-content: space-between; padding: 0 12px 0 14px; border-right: 2px solid #dadce0; }
.namebox .caret { width: 8px; height: 4px; color: #444; }
.fx { margin-left: 10px; font-family: "Liberation Serif", serif; font-style: italic; color: #a0a0a0; font-size: 17px; font-weight: 700; }

/* sheet */
.sheet { height: 1445px; flex: none; display: flex; border-top: 3px solid #bdbdbd; overflow: hidden; }
.book { width: 1069px; flex: none; background: #fff; }
.canvas { flex: 1; background: #f8faf7; }
.colhead { height: 34px; display: grid; grid-template-columns: 68px var(--cols); font-size: 17px; color: #444; border-bottom: 2px solid var(--hdr); }
.colhead span { display: flex; align-items: center; justify-content: center; padding-left: 2px; border-right: 2px solid var(--hdr); position: relative; }
.corner { background: #f5f6f7; border-bottom: 6px solid #c9c9c9; border-right: 6px solid #fff; height: 34px; }
.last { padding-right: 6px; }
.hide-arrow { position: absolute; right: 3px; top: 11px; border: 5px solid transparent; border-left: 0; border-right: 6px solid #444; }
.body { display: flex; height: 1408px; overflow: hidden; }
.rownums { width: 68px; flex: none; font-size: 17px; color: #444; border-right: 2px solid #cfcfcf; }
.rownums span { height: 36px; display: flex; align-items: center; justify-content: center; padding-left: 2px; border-bottom: 2px solid var(--hdr); }
.rownums .r-s { height: 33px; }
.cells { display: grid; grid-template-columns: var(--cols); grid-template-rows: repeat(8, 33px) repeat(32, 36px); font-family: Inter, sans-serif; color: #111; margin-top: -1px; }

.banner { grid-column: 2 / 17; grid-row: 2 / 6; background: #d4b6ac; box-shadow: inset 0 0 0 2px var(--edge); }
.cursor { grid-column: 1; grid-row: 1; border: 2px solid #1a5fd8; margin-top: 1px; position: relative; }
.handle { position: absolute; right: -6px; bottom: -6px; width: 10px; height: 10px; border-radius: 50%; background: #1a4fc8; box-shadow: 0 0 0 1.500px #fff; }
.banner-title { grid-column: 2 / 10; grid-row: 2 / 6; margin: 0; place-self: center; font-size: 72px; font-weight: 300; color: #fff; letter-spacing: .6px; }
.banner-label { grid-column: 10 / 14; grid-row: 3; place-self: center; font-size: 22px; font-weight: 300; color: #fff; }
.banner-select { grid-column: 10 / 14; grid-row: 4; display: flex; align-items: center; justify-content: space-between; padding: 0 7px 0 27px; font-size: 22px; font-weight: 300; color: #fff; border: 2px solid #bcb3ae; }

.thead { margin: 0; font-size: 24px; font-weight: 400; letter-spacing: .4px; display: flex; align-items: center; justify-content: center; box-shadow: inset 0 0 0 2px var(--edge); }
.cat-head { grid-column: 2 / 9; grid-row: 7 / 9; background: #ebd0bf; }
.pri-head { grid-column: 10 / 17; grid-row: 7 / 9; background: #d6b89f; }
.st-head { grid-column: 10 / 17; grid-row: 21 / 23; background: #d4b6ac; }
.ehead { margin: 0; font-size: 20px; font-weight: 400; letter-spacing: .7px; display: flex; align-items: center; justify-content: center; background: #99997f; box-shadow: inset 0 0 0 2px var(--edge); }
.pe-head { grid-column: 2 / 9; grid-row: 35; }
.se-head { grid-column: 10 / 17; grid-row: 35; }

.list { display: grid; grid-auto-rows: 36px; font-size: 20px; letter-spacing: 1px; box-shadow: inset 0 0 0 2px var(--edge); }
.cat-list { grid-column: 2 / 9; grid-row: 9 / 34; font-size: 19px; letter-spacing: .3px; }
.pri-list { grid-column: 10 / 17; grid-row: 9 / 20; }
.st-list { grid-column: 10 / 17; grid-row: 23 / 34; }
.row { display: flex; align-items: center; justify-content: center; margin: 0 2px; border-bottom: 2px solid var(--line); }
.row:last-child, .pick:last-child { border-bottom: 2px solid var(--edge); }
.pick { display: flex; align-items: center; margin: 0 2px; padding-left: 37px; border-bottom: 2px solid var(--line); }
.pick.dark-line { border-bottom-color: var(--edge); }
.pick .em { flex: none; }
.pick .caret { width: 11px; height: 6px; margin-left: 15px; margin-right: 15px; color: #8a8a8a; }
.em { width: 25px; height: 25px; display: block; }
.bang { color: #d9301f; font: 700 28px/25px "Liberation Sans", sans-serif; text-align: center; letter-spacing: 1px; }
.bang.one { letter-spacing: 0; }
.keycap { border-radius: 4px; background: linear-gradient(#7f98b6, #607d9e); color: #fff; font: 700 20px/25px "Liberation Sans", sans-serif; text-align: center; letter-spacing: 0; }
.zzz { display: flex; align-items: flex-end; color: #2a5bd0; font-family: "Liberation Sans", sans-serif; letter-spacing: 0; }
.zzz b { display: block; line-height: .75; }
.zzz b:nth-child(1) { font-size: 13px; }
.zzz b:nth-child(2) { font-size: 17px; margin: 0 0 5px 0; }
.zzz b:nth-child(3) { font-size: 22px; margin: 0 0 10px 0; }

.egrid { display: grid; grid-auto-rows: 36px; grid-row: 36 / 41; box-shadow: inset 0 0 0 2px var(--edge); }
.egrid > div { display: flex; align-items: center; justify-content: center; padding-left: 2px; border-right: 2px solid var(--line); border-bottom: 2px solid var(--line); }
.egrid > div:nth-child(7n) { border-right: 2px solid var(--edge); }
.pe-grid { grid-column: 2 / 9; grid-template-columns: repeat(6, 50px) 221px; }
.se-grid { grid-column: 10 / 17; grid-template-columns: 50px 50px 50px 80px 50px 50px 50px; }
.c-red { color: #d4321f; }
.c-orange { color: #ee8a28; }
.c-yellow { color: #fbc93a; }
.c-green { color: #48ac28; }
.c-blue { color: #2160e4; }
.c-purple { color: #a23cee; }
.c-black { color: #111; }

/* scrollbars */
.vscroll { width: 12px; flex: none; display: flex; flex-direction: column; background: #fff; border-left: 2px solid #e0e0e0; }
.vtrack { flex: 1; padding: 36px 0 0 1px; background: #f8f9fa; }
.vthumb { display: block; width: 8px; height: 1186px; border-radius: 4px; background: #dadce0; }
.vbtn { height: 15px; display: flex; align-items: center; justify-content: center; border-top: 2px solid #e6e6e6; background: #f5f5f5; }
.vbtn .caret { width: 8px; height: 4px; color: #8a8a8a; }
.hscroll { height: 13px; flex: none; display: flex; background: #fff; border-top: 2px solid #e0e0e0; }
.hcorner { width: 70px; background: #f5f5f5; border-right: 2px solid #e0e0e0; }
.htrack { flex: 1; }
.hbtn { width: 15px; display: flex; align-items: center; justify-content: center; background: #f5f5f5; border-left: 2px solid #e6e6e6; }
.tri-l, .tri-r { border: 4px solid transparent; }
.tri-l { border-left: 0; border-right: 5px solid #8a8a8a; }
.tri-r { border-right: 0; border-left: 5px solid #8a8a8a; }
.hend { width: 12px; background: #f5f5f5; border-left: 2px solid #e6e6e6; }

/* sheet tabs */
.tabs { height: 38px; flex: none; display: flex; align-items: center; font-size: 18px; font-weight: 500; color: #444746; letter-spacing: .9px; border-top: 2px solid #e0e0e0; }
.tabs-ico { width: 14px; height: 14px; flex: none; }
.plus { margin-left: 71px; }
.burger { margin-left: 28px; }
.tab { height: 36px; display: flex; align-items: center; gap: 12px; padding: 2px 13px 0; flex: none; }
.tab-wave { width: 69px; margin-left: 30px; padding: 0 0 0 12px; gap: 10px; }
.wave { width: 24px; height: 28px; }
.on-line { box-shadow: inset 0 -3px 0 #4a76d4; }
.tab:nth-child(4) { padding-left: 15px; }
.current { background: #e1e9f7; color: #1f4fd0; font-weight: 700; }
.current .caret { color: #1f4fd0; }
.tab-lock { width: 77px; padding: 0 0 0 15px; gap: 4px; margin-left: 1px; }
.lock-ico { width: 14px; height: 20px; }
.copy { font-size: 11px; font-weight: 400; align-self: flex-start; margin-top: 7px; }
.tab-lock .caret { margin-left: 11px; }
.side { margin-left: auto; margin-right: 21px; height: 18px; }
```
